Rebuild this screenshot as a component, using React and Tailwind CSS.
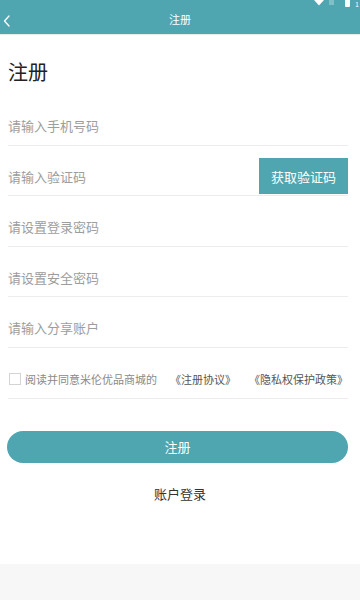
import React from "react";

const font = { fontFamily: '"Noto Sans CJK SC", "Noto Sans", sans-serif' };

function Row({ placeholder, children }) {
  return (
    <div className="flex h-[50.6px] items-center border-b border-[#ececec] pt-3">
      <input
        className="min-w-0 flex-1 bg-transparent text-[13px] text-[#333] outline-none placeholder:text-[#9d9d9d]"
        placeholder={placeholder}
      />
      {children}
    </div>
  );
}

export default function App() {
  return (
    <div className="flex h-[600px] w-[360px] flex-col bg-white" style={font}>
      <header className="relative flex h-[34px] shrink-0 items-center justify-center bg-[#4fa5b0] shadow-[0_1px_1px_rgba(0,0,0,0.08)]">
        <div className="absolute left-[3px] top-[15px]">
          <svg width="8" height="12" viewBox="0 0 8 12" fill="none">
            <path d="M6 1L1.5 6L6 11" stroke="white" strokeWidth="1.3" strokeLinecap="round" strokeLinejoin="round" />
          </svg>
        </div>
        <span className="pt-[5px] text-[11px] text-white">注册</span>
        <div className="absolute right-0 top-0 flex items-start gap-[5px]">
          <svg width="10" height="6" viewBox="0 0 10 6">
            <path d="M0 0H10L5 5.5Z" fill="white" />
          </svg>
          <div className="h-[5px] w-[5px] bg-[#7fc0c8]" />
          <div className="ml-[6px] h-[7px] w-[5px] rounded-b-[1px] bg-white" />
          <span className="mr-[1px] text-[7px] leading-[8px] text-white">1</span>
        </div>
      </header>

      <div className="pl-2 pr-3">
        <h1 className="pt-[27px] pb-[13px] text-[20px] leading-[21px] text-[#222]">注册</h1>
        <Row placeholder="请输入手机号码" />
        <Row placeholder="请输入验证码">
          <button className="h-[36px] w-[89px] bg-[#4fa5b0] text-[13px] text-white">获取验证码</button>
        </Row>
        <Row placeholder="请设置登录密码" />
        <Row placeholder="请设置安全密码" />
        <Row placeholder="请输入分享账户" />
        <div className="flex h-[50.6px] items-center justify-between border-b border-[#ececec] pt-3 text-[11px]">
          <label className="flex items-center">
            <span className="ml-px mr-[4px] h-[12px] w-[12px] border border-[#d4d4d4] bg-white" />
            <span className="text-[#8a8a8a]">阅读并同意米伦优品商城的</span>
          </label>
          <span className="text-[#555]">《注册协议》</span>
          <span className="text-[#555]">《隐私权保护政策》</span>
        </div>
      </div>

      <button className="ml-[7px] mr-3 mt-8 h-8 shrink-0 rounded-full bg-[#4fa5b0] text-[13px] text-white">注册</button>
      <div className="mt-[22px] text-center text-[13px] leading-[18px] text-[#333]">账户登录</div>
      <div className="flex-1" />
      <div className="h-[36px] shrink-0 bg-[#f7f7f7]" />
    </div>
  );
}
